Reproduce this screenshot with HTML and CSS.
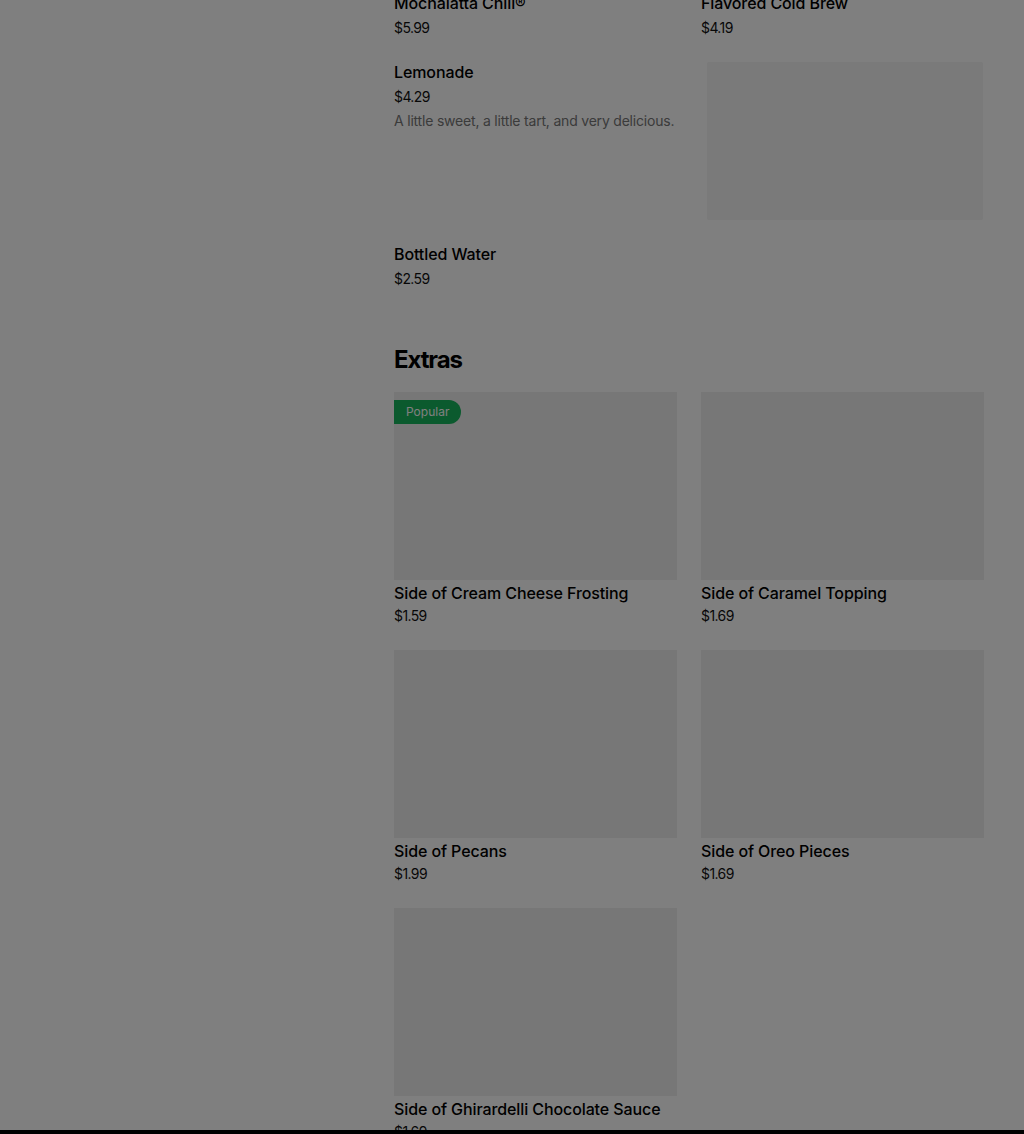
FILE: index.html
```html
<!DOCTYPE html>
<html lang="en">
  <head>
    <meta charset="UTF-8" />
    <meta name="viewport" content="width=device-width, initial-scale=1.0" />
    <title>Menu</title>
    <link rel="stylesheet" href="styles.css">
  </head>
  <body>
    <div id="wrap">
      <aside class="sidebar"></aside>
      <main class="menu">
        <section class="section section_drinks">
          <ul class="list">
            <li class="item">
              <p class="item_title">Mochalatta Chill®</p>
              <p class="item_price">$5.99</p>
            </li>
            <li class="item">
              <p class="item_title">Flavored Cold Brew</p>
              <p class="item_price">$4.19</p>
            </li>
            <li class="item">
              <p class="item_title">Lemonade</p>
              <p class="item_price">$4.29</p>
              <p class="item_desc">A little sweet, a little tart, and very delicious.</p>
            </li>
            <li class="item">
              <div class="skeleton"></div>
            </li>
            <li class="item">
              <p class="item_title">Bottled Water</p>
              <p class="item_price">$2.59</p>
            </li>
          </ul>
        </section>

        <section class="section">
          <h2 class="section_title">Extras</h2>
          <ul class="list">
            <li class="card">
              <div class="card_image"><span class="badge">Popular</span></div>
              <p class="item_title">Side of Cream Cheese Frosting</p>
              <p class="item_price">$1.59</p>
            </li>
            <li class="card">
              <div class="card_image"></div>
              <p class="item_title">Side of Caramel Topping</p>
              <p class="item_price">$1.69</p>
            </li>
            <li class="card">
              <div class="card_image"></div>
              <p class="item_title">Side of Pecans</p>
              <p class="item_price">$1.99</p>
            </li>
            <li class="card">
              <div class="card_image"></div>
              <p class="item_title">Side of Oreo Pieces</p>
              <p class="item_price">$1.69</p>
            </li>
            <li class="card">
              <div class="card_image"></div>
              <p class="item_title">Side of Ghirardelli Chocolate Sauce</p>
              <p class="item_price">$1.69</p>
            </li>
          </ul>
        </section>
      </main>
    </div>
    <div class="overlay"></div>
    <div class="sheet_edge"></div>
  </body>
</html>
```

FILE: styles.css
```css
* {
  margin: 0;
  padding: 0;
  box-sizing: border-box;
}

html,
body {
  height: 1134px;
  overflow: hidden;
}

body {
  background: #fff;
  color: #000;
  font-family: Inter, "Noto Sans", sans-serif;
}

ul,
li {
  list-style: none;
}

#wrap {
  display: grid;
  grid-template-columns: 370px 590px;
  column-gap: 24px;
  margin-top: -7px;
}

.list {
  display: grid;
  grid-template-columns: repeat(2, 283px);
  column-gap: 24px;
  row-gap: 24px;
}

.item_title {
  font-size: 16px;
  line-height: 20px;
  font-weight: 500;
  letter-spacing: -0.1px;
  white-space: nowrap;
}

.item_price {
  font-size: 14px;
  line-height: 20px;
  margin-top: 5px;
  letter-spacing: -0.6px;
  color: #111;
}

.item_desc {
  font-size: 14px;
  line-height: 20px;
  margin-top: 4px;
  letter-spacing: -0.2px;
  color: #767676;
  white-space: nowrap;
}

.skeleton {
  margin-left: 6px;
  width: 276px;
  height: 158px;
  background: #f4f4f4;
  border-radius: 2px;
}

.section + .section {
  margin-top: 55px;
}

.section_title {
  font-size: 24px;
  line-height: 32px;
  font-weight: 700;
  letter-spacing: -1.1px;
  margin-bottom: 16px;
}

.card_image {
  position: relative;
  height: 188px;
  background: #eeeeee;
}

.card .item_title {
  margin-top: 3px;
}

.card .item_price {
  margin-top: 3px;
}

.badge {
  position: absolute;
  top: 8px;
  left: 0;
  height: 24px;
  padding: 0 12px;
  border-radius: 0 12px 12px 0;
  background: #16b45c;
  color: #fff;
  font-size: 12px;
  line-height: 24px;
}

.overlay {
  position: fixed;
  inset: 0;
  background: rgba(0, 0, 0, 0.5);
}

.sheet_edge {
  position: fixed;
  left: 0;
  right: 0;
  bottom: 0;
  height: 4px;
  background: #000;
}
```
